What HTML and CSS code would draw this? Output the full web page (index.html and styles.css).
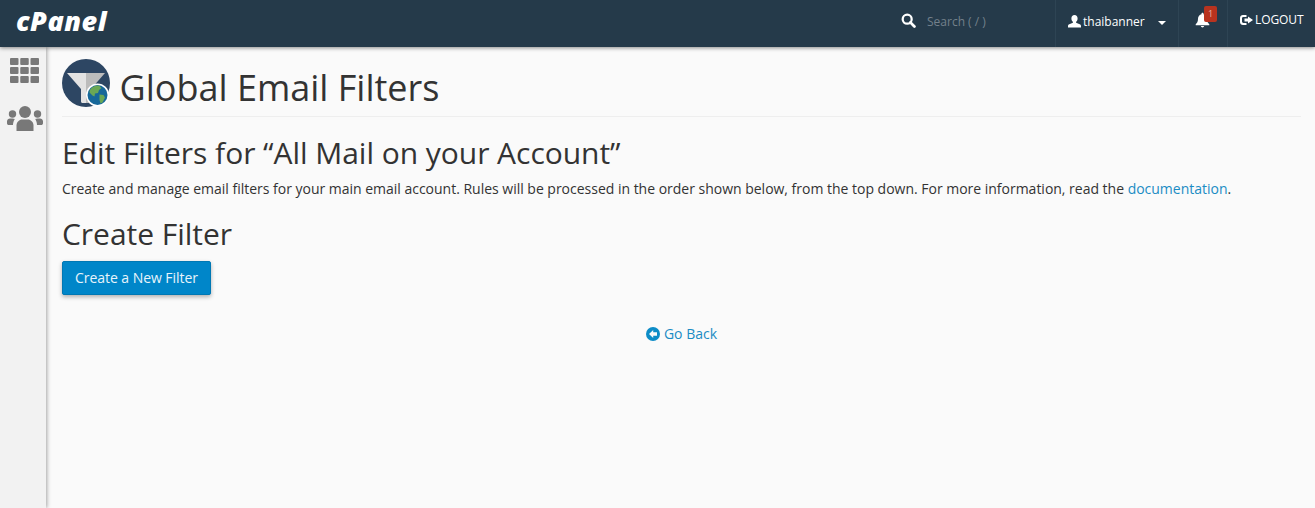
FILE: index.html
```html
<!DOCTYPE html>
<html lang="en">
<head>
<meta charset="utf-8">
<title>Global Email Filters</title>
<link rel="stylesheet" href="styles.css">
</head>
<body>
<header class="topbar">
  <a class="logo">cPanel</a>
  <div class="top-right">
    <div class="search">
      <svg class="ic-search" viewBox="0 0 16 16"><circle cx="6.6" cy="6.6" r="4.8" fill="none" stroke="#fff" stroke-width="2.4"/><path d="M10 10l4.3 4.3" stroke="#fff" stroke-width="3" stroke-linecap="round"/></svg>
      <span class="search-text">Search ( / )</span>
    </div>
    <div class="nav-item user">
      <svg class="ic-user" viewBox="0 0 13 13"><path fill="#fff" d="M6.5 0C4.6 0 3.4 1.4 3.4 3.4c0 1.4.6 2.7 1.5 3.4v1L1.300 9.300C.4 9.700 0 10.300 0 11.200V12.500h13v-1.300c0-.9-.4-1.500-1.300-1.900L8.100 7.800v-1c.9-.7 1.500-2 1.500-3.400C9.600 1.400 8.400 0 6.500 0z"/></svg>
      <span>thaibanner</span>
      <span class="caret"></span>
    </div>
    <div class="nav-item bell">
      <svg class="ic-bell" viewBox="0 0 15 16"><path fill="#fff" d="M7.500 0.800c-.6 0-1 .4-1 1v.4C4.300 2.700 3 4.500 3 6.800c0 3-1 4.300-2.300 5.500v.9h13.600v-.9C13 11.100 12 9.800 12 6.800c0-2.300-1.300-4.100-3.500-4.600v-.4c0-.6-.4-1-1-1zM5.800 14.100c.2.800.9 1.400 1.700 1.400s1.500-.6 1.700-1.400z"/></svg>
      <span class="badge">1</span>
    </div>
    <div class="nav-item logout">
      <svg class="ic-logout" viewBox="0 0 13 12"><path fill="#fff" d="M3 1h3.500v2H3.400C2.600 3 2 3.600 2 4.400v3.200C2 8.400 2.600 9 3.400 9h3.100v2H3C1.300 11 0 9.700 0 8V4C0 2.300 1.300 1 3 1z"/><path fill="#fff" d="M8 2.500L13 6 8 9.500V7.500H4.500v-3H8z"/></svg>
      <span>LOGOUT</span>
    </div>
  </div>
</header>
<div class="shell">
  <aside class="sidebar">
    <svg class="ic-grid" viewBox="0 0 29 25">
      <rect x="0" y="0" width="8.500" height="7" rx="1"/><rect x="10.250" y="0" width="8.500" height="7" rx="1"/><rect x="20.500" y="0" width="8.500" height="7" rx="1"/>
      <rect x="0" y="9" width="8.500" height="7" rx="1"/><rect x="10.250" y="9" width="8.500" height="7" rx="1"/><rect x="20.500" y="9" width="8.500" height="7" rx="1"/>
      <rect x="0" y="18" width="8.500" height="7" rx="1"/><rect x="10.250" y="18" width="8.500" height="7" rx="1"/><rect x="20.500" y="18" width="8.500" height="7" rx="1"/>
    </svg>
    <svg class="ic-users" viewBox="0 0 36 25">
      <circle cx="18" cy="6" r="6"/><circle cx="5.500" cy="8" r="3.700"/><circle cx="30.500" cy="8" r="3.700"/>
      <path d="M9.500 25v-5.500c0-3.500 3-6 5.500-6h6c2.500 0 5.500 2.500 5.500 6V25c0 0-4 0-8.500 0s-8.500 0-8.500 0z"/>
      <path d="M7.800 13c-1 1.500-1.800 3.500-1.800 6H1.800C.8 19 0 18.200 0 17.200V15.500c0-1.800 1.500-3 3-3h2.500c.9 0 1.700.2 2.300.5zM28.200 13c1 1.500 1.800 3.500 1.800 6h4.200c1 0 1.800-.8 1.800-1.800V15.500c0-1.800-1.500-3-3-3h-2.500c-.9 0-1.700.2-2.300.5z"/>
    </svg>
  </aside>
  <main class="content">
    <div class="page-head">
      <svg class="page-icon" viewBox="0 0 48 48">
        <circle cx="24" cy="24" r="24" fill="#2d4663"/>
        <path fill="#e3e3e3" d="M5 14h19v30h-3.500c-.8 0-1.500-.7-1.500-1.500V30z"/>
        <path fill="#bcbcbc" d="M24 14h19L29 30v12c0 1-1 2-2 2h-3z"/>
        <circle cx="35.500" cy="36" r="11.500" fill="#fff"/>
        <circle cx="35.500" cy="36" r="10" fill="#17689a"/>
        <path fill="#6aa855" d="M29.500 29c2-2 6-3 8-2l2 2-2.500 2-1 3-3 .5-.5 3-2-1-3-3c0-1.500.5-3.500 2-4.500zM37.500 35.500l4 .5 1.500 2.500-2.500 5-2 1-1-3.500z"/>
      </svg>
      <h1 class="page-title">Global Email Filters</h1>
    </div>
    <h2 class="section-title first">Edit Filters for “All Mail on your Account”</h2>
    <p class="desc">Create and manage email filters for your main email account. Rules will be processed in the order shown below, from the top down. For more information, read the <a class="link">documentation</a>.</p>
    <h2 class="section-title second">Create Filter</h2>
    <a class="btn">Create a New Filter</a>
    <div class="back">
      <a class="link back-link">
        <svg class="ic-back" viewBox="0 0 14 14"><circle cx="7" cy="7" r="7" fill="#0d8cc7"/><path fill="#fafafa" d="M7.200 3L3 7l4.200 4V8.700H11V5.300H7.200z"/></svg>
        <span>Go Back</span>
      </a>
    </div>
  </main>
</div>
</body>
</html>
```
FILE: styles.css
```css
* { box-sizing: border-box; }
html, body { height: 100%; }
body {
  margin: 0;
  background: #fafafa;
  color: #333;
  font-family: "Open Sans", "Liberation Sans", sans-serif;
  font-size: 14px;
  line-height: 20px;
  overflow: hidden;
}
.topbar {
  position: relative;
  z-index: 2;
  height: 47px;
  background: #253a4a;
  display: flex;
  justify-content: space-between;
  box-shadow: 0 1px 4px rgba(0, 0, 0, .45);
  color: #fff;
}
.logo {
  margin-left: 16px;
  font-weight: 800;
  font-style: italic;
  font-size: 27px;
  line-height: 42px;
  letter-spacing: .5px;
  color: #fff;
}
.top-right { display: flex; align-items: stretch; }
.search {
  width: 155px;
  display: flex;
  align-items: center;
  padding-left: 1px;
  padding-bottom: 4px;
}
.ic-search { width: 15px; height: 15px; margin-top: -2px; }
.search-text { margin-left: 11px; font-size: 12px; color: #73808a; }
.nav-item {
  border-left: 1px solid #2e4454;
  display: flex;
  align-items: center;
  font-size: 12px;
  padding-bottom: 4px;
}
.user { width: 123px; padding-left: 12px; }
.ic-user { width: 13px; height: 13px; margin-right: 2px; }
.caret {
  margin-left: 13px;
  border-left: 4px solid transparent;
  border-right: 4px solid transparent;
  border-top: 4px solid #fff;
  margin-top: 2px;
}
.bell { width: 49px; position: relative; padding-left: 16px; padding-bottom: 9px; }
.ic-bell { width: 15px; height: 16px; margin-top: 2px; }
.badge {
  position: absolute;
  left: 25px;
  top: 6px;
  width: 13px;
  height: 16px;
  background: #b8331f;
  border-radius: 2px;
  color: #e6b5ab;
  font-size: 9px;
  line-height: 16px;
  text-align: center;
}
.logout { width: 88px; padding-left: 12px; letter-spacing: -.1px; padding-bottom: 7px; }
.ic-logout { width: 13px; height: 12px; margin-right: 2px; }
.shell { display: flex; height: 461px; }
.sidebar {
  width: 46px;
  background: #f2f2f2;
  box-shadow: 1px 0 4px rgba(0, 0, 0, .35);
  display: flex;
  flex-direction: column;
  align-items: center;
  padding-top: 11px;
  padding-left: 3px;
  flex: none;
}
.ic-grid { width: 29px; height: 25px; fill: #787878; margin-bottom: 23px; }
.ic-users { width: 36px; height: 25px; fill: #787878; }
.content { flex: 1; padding: 12px 14px 0 16px; min-width: 0; }
.page-head {
  display: flex;
  align-items: center;
  height: 58px;
  padding-bottom: 9px;
  border-bottom: 1px solid #eee;
}
.page-icon { width: 48px; height: 48px; flex: none; }
.page-title {
  margin: 0 0 0 9.500px;
  font-size: 36px;
  font-weight: 400;
  line-height: 40px;
  color: #333;
  padding-top: 10px;
}
.section-title {
  margin: 0;
  font-size: 30px;
  font-weight: 400;
  line-height: 33px;
  letter-spacing: -.04px;
}
.section-title.first { margin-top: 19px; }
.section-title.second { margin-top: 18px; }
.desc { margin: 10px 0 0; letter-spacing: -.012px; }
.btn {
  display: inline-block;
  margin-top: 11px;
  height: 34px;
  padding: 6px 12px;
  background: #0086c9;
  border: 1px solid #0078b4;
  border-radius: 2px;
  color: #e8f4fb;
  letter-spacing: -.05px;
  box-shadow: 0 2px 4px rgba(0, 0, 0, .3);
}
.link { color: #1a8cc4; }
.back { margin-top: 29px; display: flex; justify-content: center; }
.back-link { display: flex; align-items: center; gap: 4px; }
.ic-back { width: 14px; height: 14px; }
```
